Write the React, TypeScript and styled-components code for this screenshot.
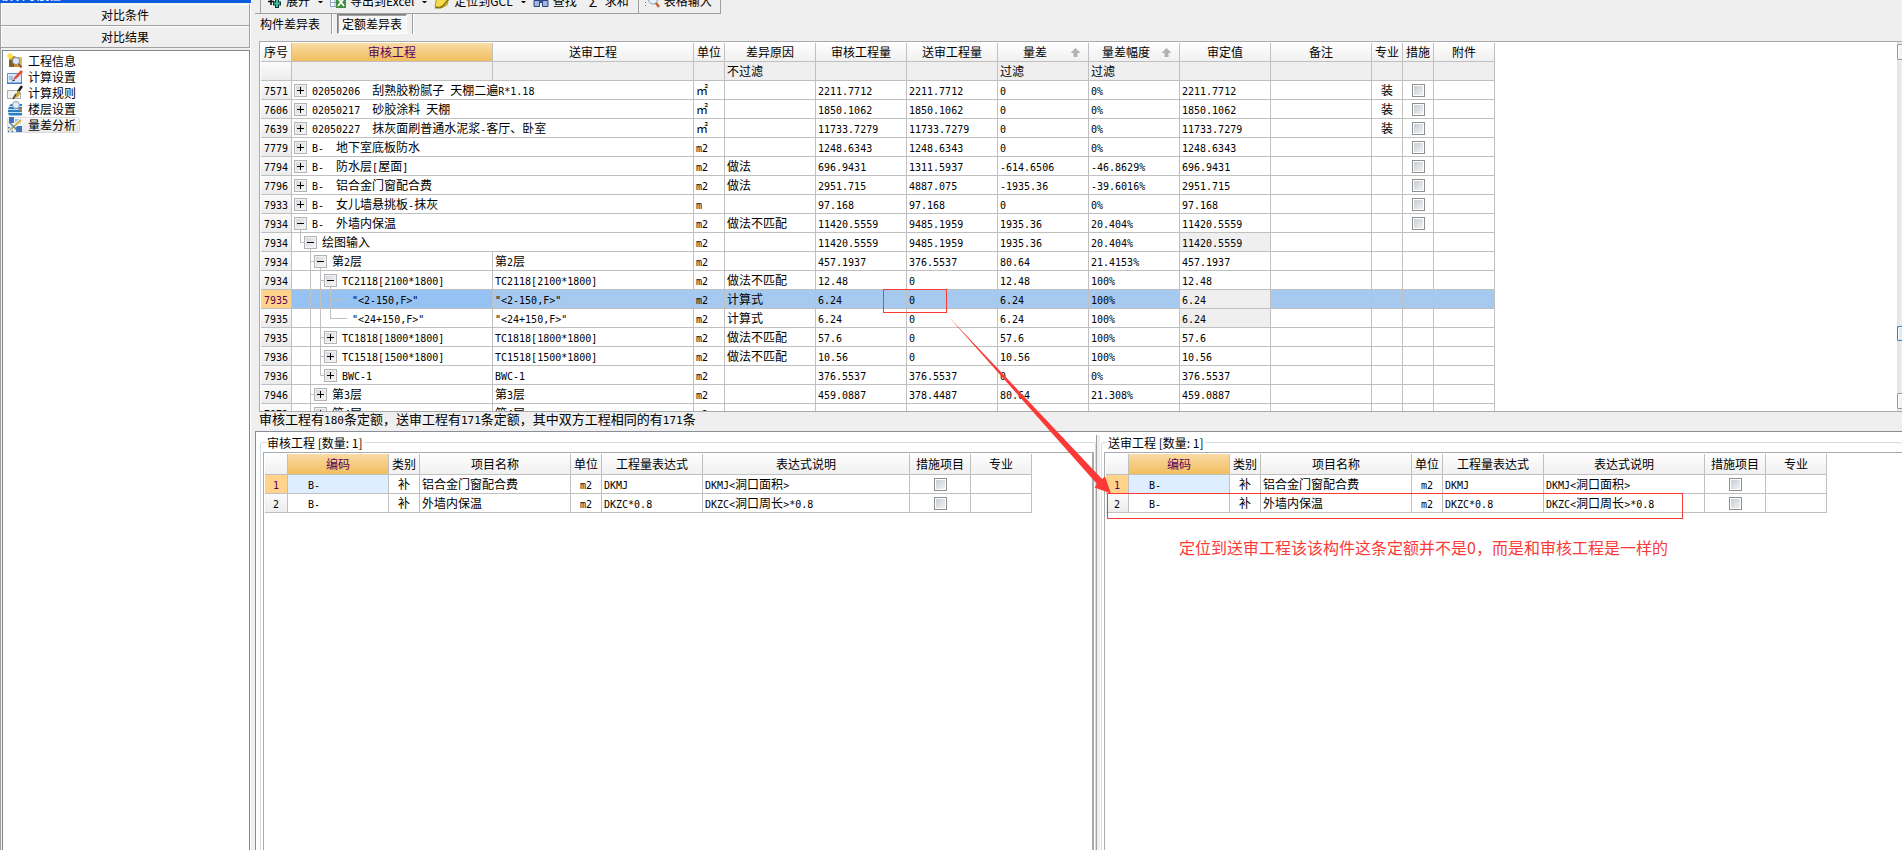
import React, { Fragment, ReactNode } from 'react';
import styled, { createGlobalStyle, css } from 'styled-components';

const line = '#c0c0c0';
const frame = '#a9aaab';
const red = '#fb3a38';

const GlobalStyle = createGlobalStyle`
  * { box-sizing: border-box; }
  body {
    margin: 0;
    overflow: hidden;
    background: #efefef;
    color: #000;
    font: 12px/18px "Noto Sans CJK SC", sans-serif;
  }
  button, input { font: inherit; color: inherit; margin: 0; padding: 0; }
`;

/* ---------- text ---------- */

const Latin = styled.span<{ $large?: boolean }>`
  font-family: "DejaVu Sans Mono", monospace;
  font-size: ${(p) => (p.$large ? 11 : 10)}px;
  line-height: 10px;
`;

function Mixed({ text, large }: { text: string; large?: boolean }) {
  return (
    <>
      {text.split(/([\x20-\x7e]+)/).map((part, i) =>
        i % 2 ? (
          <Latin key={i} $large={large}>
            {part}
          </Latin>
        ) : (
          <Fragment key={i}>{part}</Fragment>
        ),
      )}
    </>
  );
}

/* ---------- page frame ---------- */

const Page = styled.div`
  position: relative;
  display: flex;
  height: 100vh;
  overflow: hidden;
`;

const Sidebar = styled.aside`
  display: flex;
  flex-direction: column;
  flex: 0 0 251px;
`;

const TitleBar = styled.header`
  display: flex;
  align-items: flex-end;
  justify-content: space-between;
  height: 3px;
  padding: 0 12px 0 1px;
  overflow: hidden;
  background: #0a5be0;
  color: #fff;
  line-height: 16px;
  font-weight: bold;
`;

const NavBody = styled.div`
  display: flex;
  flex-direction: column;
  flex: 1;
  min-height: 0;
  padding-top: 1px;
  border-left: 1px solid #a0a0a0;
  border-right: 1px solid #fff;
`;

const NavHeading = styled.button`
  height: 22px;
  border: 0;
  border-right: 1px solid #a0a0a0;
  border-bottom: 1px solid #a0a0a0;
  background: #efefef;
  line-height: 21px;
  box-shadow: inset 1px 1px #fff;
`;

const NavList = styled.ul`
  flex: 1;
  margin: 2px 0 0 1px;
  padding: 2px 4px;
  border: 1px solid #83888e;
  border-bottom: 0;
  background: #fff;
  list-style: none;
`;

const NavLink = styled.a<{ $active?: boolean }>`
  display: flex;
  gap: 5px;
  width: max-content;
  height: 16px;
  padding-right: 4px;
  border-radius: 3px;
  color: #000;
  line-height: 16px;
  text-decoration: none;
  ${(p) => p.$active && css`
    background: linear-gradient(#fafafa, #e8e8e8);
    box-shadow: inset 0 0 0 1px #dcdcdc;
  `}
`;

const Main = styled.main`
  display: flex;
  flex-direction: column;
  flex: 1;
  min-width: 0;
  padding-left: 4px;
`;

/* ---------- toolbar and tabs ---------- */

const Toolbar = styled.div`
  display: flex;
  align-items: flex-end;
  width: max-content;
  height: 14px;
  padding: 0 8px 0 11px;
  overflow: hidden;
  border-right: 1px solid #a0a0a0;
  border-bottom: 1px solid #a0a0a0;
  box-shadow: inset 5px 0 #efefef, inset 6px 0 #a0a0a0;
`;

const Tool = styled.button`
  display: flex;
  align-items: center;
  gap: 4px;
  height: 24px;
  border: 0;
  background: none;
  white-space: nowrap;
`;

const Sigma = styled.span`
  width: 12px;
  font-size: 14px;
  text-align: left;
`;

const Caret = styled.i`
  width: 5px;
  margin: 0 7px 10px 8px;
  border: 2px solid transparent;
  border-top-color: #000;
  border-bottom: 0;
`;

const ToolGap = styled.i`
  width: 12px;
`;

const ToolDivider = styled.i`
  width: 1px;
  height: 24px;
  margin: 0 5px 0 9px;
  background: #a0a0a0;
`;

const Tabs = styled.nav`
  display: flex;
  height: 27px;
  padding: 0 5px 7px;
`;

const Tab = styled.button<{ $active?: boolean }>`
  height: 20px;
  margin-right: ${(p) => (p.$active ? 5 : 11)}px;
  padding: 0 ${(p) => (p.$active ? 4 : 0)}px;
  border: 0;
  background: none;
  line-height: 18px;
  ${(p) => p.$active && css`
    margin-left: 5px;
    border: 1px solid #fff;
    border-top-color: #808080;
    border-left-color: #808080;
    background: #f7f7f7;
    box-shadow: inset 1px 1px #a0a0a0;
  `}
`;

const TabDivider = styled.i`
  width: 1px;
  height: 20px;
  background: #a0a0a0;
  box-shadow: 1px 0 #fff;
`;

/* ---------- data grids ---------- */

const Viewport = styled.section`
  display: flex;
  flex: 37 1 0;
  min-height: 0;
  margin-left: 4px;
  border: 1px solid ${frame};
  border-right: 0;
  background: #fff;
`;

const GridClip = styled.div`
  flex: 1;
  min-width: 0;
  padding: 1px 0 0 1px;
  overflow: hidden;
`;

const Table = styled.table`
  width: 0;
  table-layout: fixed;
  border-collapse: separate;
  border-spacing: 0;
`;

const cell = css`
  height: 19px;
  padding: 0 2px;
  overflow: hidden;
  border: 0 solid ${line};
  border-width: 0 1px 1px 0;
  line-height: 18px;
  white-space: pre;
`;

const Th = styled.th<{ $current?: boolean; $tall?: boolean }>`
  ${cell}
  height: ${(p) => (p.$tall ? 21 : 19)}px;
  padding: 0;
  background: linear-gradient(#fefefe, #f0f0f0);
  font-weight: normal;
  ${(p) => p.$current && css`
    background: linear-gradient(#f9dba4, #f0be5e);
    color: #5a005a;
  `}
`;

const SortHead = styled.span`
  display: flex;
  align-items: center;
  justify-content: space-between;
  padding: 0 8px 0 0;
  &::before { content: ""; width: 1px; }
`;

type Tone = 'plain' | 'muted' | 'row' | 'focus' | 'pale';
const tones: Record<Tone, string> = {
  plain: '#fff',
  muted: '#efefef',
  row: '#a6c9ef',
  focus: '#95c2f3',
  pale: '#dfeeff',
};

const Td = styled.td<{ $tone?: Tone; $center?: boolean; $indent?: boolean }>`
  ${cell}
  background: ${(p) => tones[p.$tone ?? 'plain']};
  ${(p) => p.$center && 'padding: 0; text-align: center;'}
  ${(p) => p.$indent && 'padding-left: 20px;'}
`;

const RowHead = styled.th<{ $current?: boolean }>`
  ${cell}
  padding: 0;
  background: ${(p) => (p.$current ? '#ffd48a' : 'linear-gradient(#fbfbfb, #ececec)')};
  color: ${(p) => (p.$current ? '#5a005a' : '#000')};
  font-weight: normal;
`;

const Check = styled.input`
  appearance: none;
  display: block;
  width: 13px;
  height: 13px;
  margin: 1px auto 0;
  padding: 1px;
  border: 1px solid #8e8f8f;
  background: linear-gradient(135deg, #c4cad2, #f4f5f6);
  background-clip: content-box;
`;

/* ---------- tree column ---------- */

const TreeLine = styled.div`
  display: flex;
  height: 18px;
  padding-left: 1px;
`;

type GuideKind = ' ' | '|' | 'T' | 'L';

const Guide = styled.i<{ $kind: GuideKind }>`
  flex: 0 0 10px;
  background-repeat: no-repeat;
  background-image: linear-gradient(${line}, ${line}), linear-gradient(${line}, ${line});
  background-position: 5px 0, 5px 9px;
  background-size:
    ${(p) => (p.$kind === ' ' ? '0 0' : p.$kind === 'L' ? '1px 10px' : '1px 18px')},
    ${(p) => (p.$kind === 'T' || p.$kind === 'L' ? '5px 1px' : '0 0')};
`;

const NodeSlot = styled.span<{ $open: boolean; $leaf: boolean }>`
  flex: 0 0 17px;
  height: 18px;
  padding-top: 3px;
  background-repeat: no-repeat;
  background-image: linear-gradient(${line}, ${line});
  background-position: ${(p) => (p.$leaf ? '0 9px' : '5px 15px')};
  background-size: ${(p) => (p.$leaf ? '12px 1px' : p.$open ? '1px 3px' : '0 0')};
`;

const Toggle = styled.button`
  display: block;
  width: 13px;
  height: 13px;
  margin-left: -1px;
  border: 1px solid #b4b4b4;
  background: linear-gradient(135deg, #cfd3da, #fafafa);
  box-shadow: inset 0 0 0 1px #f2f2f2;
  svg { display: block; }
`;

function Tree({ guides, open, leaf, text }: { guides: string; open: boolean; leaf: boolean; text: string }) {
  return (
    <TreeLine>
      {guides.split('').map((k, i) => (
        <Guide key={i} $kind={k as GuideKind} />
      ))}
      <NodeSlot $open={open} $leaf={leaf}>
        {!leaf && (
          <Toggle aria-label={open ? '折叠' : '展开'}>
            <svg width="11" height="11" stroke="#000">
              <path d={open ? 'M2 5.5h7' : 'M2 5.5h7M5.5 2v7'} />
            </svg>
          </Toggle>
        )}
      </NodeSlot>
      <span>
        <Mixed text={text} />
      </span>
    </TreeLine>
  );
}

/* ---------- scroll bar ---------- */

const ScrollBar = styled.div`
  display: flex;
  flex-direction: column;
  flex: 0 0 5px;
  padding: 2px 0;
  overflow: hidden;
  background: linear-gradient(90deg, #e2e2e2, #f0f0f0);
`;

const ScrollPiece = styled.button<{ $thumb?: boolean }>`
  flex: 0 0 ${(p) => (p.$thumb ? 15 : 16)}px;
  border: 1px solid ${(p) => (p.$thumb ? '#3c7fb1' : '#979797')};
  border-right: 0;
  border-radius: 2px 0 0 2px;
  background: ${(p) => (p.$thumb ? '#d5eefb' : '#f3f3f3')};
  box-shadow: inset 1px 1px #fff;
`;

const Track = styled.i<{ $share: number }>`
  flex: ${(p) => p.$share} 1 0;
`;

/* ---------- lower half ---------- */

const Status = styled.p`
  flex: 0 0 19px;
  margin: 0 0 0 4px;
  font-size: 13px;
  line-height: 13px;
`;

const Lower = styled.div`
  display: grid;
  grid-template-columns: minmax(0, 840fr) 4px minmax(0, 802fr);
  flex: 42 1 0;
  min-height: 0;
  overflow: hidden;
  border-top: 1px solid #8a8c96;
  border-left: 1px solid #8a8c96;
  background: #fff;
`;

const Splitter = styled.div`
  margin-top: 3px;
  border-left: 1px solid #a0a0a0;
  background: #efefef;
`;

const Group = styled.fieldset<{ $last?: boolean }>`
  display: flex;
  min-width: 0;
  margin: 4px 0 0 ${(p) => (p.$last ? 1 : 4)}px;
  padding: 2px ${(p) => (p.$last ? 0 : 1)}px 0 2px;
  border: 1px solid #d3dde6;
  border-bottom: 0;
  ${(p) => p.$last && 'border-right: 0;'}
  border-radius: 3px 3px 0 0;
`;

const Legend = styled.legend`
  margin-left: 3px;
  padding: 0 1px;
  height: 14px;
  line-height: 14px;
`;

const GroupGrid = styled.div<{ $last?: boolean }>`
  flex: 1;
  min-width: 0;
  padding: 1px 0 0 1px;
  overflow: hidden;
  border: 1px solid ${frame};
  border-bottom: 0;
  border-right-width: ${(p) => (p.$last ? 0 : 2)}px;
`;

/* ---------- annotation layer ---------- */

const Markup = styled.svg`
  position: absolute;
  inset: 0;
  width: 100%;
  height: 100%;
  pointer-events: none;
`;

const Remark = styled.p`
  position: absolute;
  left: 1179px;
  top: 535px;
  margin: 0;
  color: ${red};
  font-size: 16px;
  line-height: 24px;
  white-space: nowrap;
`;

/* ---------- icons ---------- */

const Icon = ({ children }: { children: ReactNode }) => (
  <svg width="16" height="16" viewBox="0 0 16 16" fill="none">
    {children}
  </svg>
);

const ProjectIcon = () => (
  <Icon>
    <path d="M4 3h4l1 1h6v10H2V6z" fill="#c79432" />
    <path d="M2 7h5v7H2z" fill="#8c5f1c" />
    <path d="M10 4h5v9h-5z" fill="#e3b75c" />
    <path d="M3 0v6M0 3h6M1 1l4 4M5 1L1 5" stroke="#ffe04a" strokeWidth="1.4" />
    <circle cx="9" cy="8" r="3.6" fill="#dbe9f8" stroke="#7d8ba3" />
    <path d="M11.5 11l3 3.5" stroke="#9c5a33" strokeWidth="2" />
  </Icon>
);
const SettingsIcon = () => (
  <Icon>
    <path d="M.5 4.5h14v10H.5z" fill="#dbe9fa" stroke="#5b8fd0" />
    <path d="M0 13.5h15V15H0z" fill="#3e78c2" />
    <path d="M2 8h4M2 10h4" stroke="#6b94c9" />
    <path d="M6 11l1.5-3L14 1l2 2-6.500 6.500z" fill="#e44a38" />
    <path d="M5 12l3-1" stroke="#333" />
  </Icon>
);
const RuleIcon = () => (
  <Icon>
    <path d="M.5 5.5h10l3 2v6H.5z" fill="#eef0f2" stroke="#a7adb5" />
    <path d="M15 1l-4 6" stroke="#1d1d1d" strokeWidth="2.6" />
    <path d="M11.5 5.5l2 2-2 4-6 2.5 3-5z" fill="#caa53c" />
    <path d="M6 14l3-5" stroke="#5b4a18" strokeWidth="1.5" />
  </Icon>
);
const FloorIcon = () => (
  <Icon>
    <path d="M4 3h11v2H2zM2 6h13v2H1zM1 9h14v2H1zM1 12h14v2.5H2z" fill="#2c7fc2" />
    <path d="M2 5.5h12M1 8.5h13M1 11.5h13" stroke="#bfe0f6" />
    <circle cx="9" cy="4" r="3.5" fill="#e4eef8" stroke="#8a98ab" />
    <path d="M12 7l2.5 3" stroke="#c07a4a" strokeWidth="2" />
  </Icon>
);
const AnalysisIcon = () => (
  <Icon>
    <path d="M2 0h5v6H2zM9 9h6v6H9zM1 10h5v5H1z" fill="#3d72bd" />
    <path d="M8 2h6v5H8z" fill="#9dbbe4" />
    <path d="M2 14L14 3" stroke="#f5f5f5" strokeWidth="4" />
    <path d="M3 13L14 3" stroke="#c9b14a" strokeWidth="2" />
    <path d="M2 5l9 9" stroke="#5d7fb0" strokeWidth="1.5" />
  </Icon>
);
const ExpandIcon = () => (
  <Icon>
    <path d="M5 5v7M2 8.5h6" stroke="#111" strokeWidth="1.6" />
    <path d="M11 5v10M7 10.5h8" stroke="#07343a" strokeWidth="4" />
    <path d="M11 6v8M8 10.5h6" stroke="#3fc08f" strokeWidth="2" />
  </Icon>
);
const ExcelIcon = () => (
  <Icon>
    <path d="M.5 1.5h9v12h-9zM.5 5.5h9M.5 9.5h9M5 1v12" stroke="#8fa8ca" fill="#fff" />
    <path d="M6 3h10v12H6z" fill="#3f8f3c" />
    <path d="M8 5.5l6 7.5M14 5.5L8 13" stroke="#fff" strokeWidth="1.8" />
  </Icon>
);
const LocateIcon = () => (
  <Icon>
    <path d="M1 13l2-9 8-3 4 3-2 8-6 3z" fill="#f3dc4e" stroke="#b6961d" />
    <path d="M1 14.5c4 1 8-1 10-4l4-5" stroke="#8c7414" strokeWidth="1.5" />
  </Icon>
);
const FindIcon = () => (
  <Icon>
    <path d="M2 2h4v5H2zM10 2h4v5h-4zM6 6h4v4H6z" fill="#35528f" />
    <path d="M1 7.5h5.5v6H1zM9.5 7.5H15v6H9.5z" fill="#9fb6e0" stroke="#2c437e" />
  </Icon>
);
const SheetIcon = () => (
  <Icon>
    <path d="M1.5 0v15" stroke="#777" strokeDasharray="1 2" />
    <circle cx="9" cy="6.5" r="4.5" fill="#e8f0fb" stroke="#8d9bb0" />
    <path d="M12 10l3 4" stroke="#c0692c" strokeWidth="2.6" />
  </Icon>
);
const SortIcon = () => (
  <svg width="9" height="9" viewBox="0 0 9 9">
    <path d="M4.5 0L9 4.5V5H6.500v4h-4V5H0v-.5z" fill="#b2b2b2" />
  </svg>
);

/* ---------- data ---------- */

const navItems: [string, () => ReactNode][] = [
  ['工程信息', ProjectIcon],
  ['计算设置', SettingsIcon],
  ['计算规则', RuleIcon],
  ['楼层设置', FloorIcon],
  ['量差分析', AnalysisIcon],
];

const columns: [string, number][] = [
  ['序号', 31], ['审核工程', 201], ['送审工程', 201], ['单位', 31], ['差异原因', 91],
  ['审核工程量', 91], ['送审工程量', 91], ['量差', 91], ['量差幅度', 91], ['审定值', 91],
  ['备注', 101], ['专业', 31], ['措施', 31], ['附件', 61],
];
const filters: Record<number, string> = { 4: '不过滤', 7: '过滤', 8: '过滤' };

interface Item {
  seq: string;
  name: string;
  guides?: string;
  open?: boolean;
  leaf?: boolean;
  sent?: string;
  unit: string;
  reason?: string;
  values: string[];
  locked?: boolean;
  major?: string;
  check?: boolean;
  selected?: boolean;
}

const items: Item[] = [
  { seq: '7571', name: '02050206  刮熟胶粉腻子 天棚二遍R*1.18', unit: '㎡', values: ['2211.7712', '2211.7712', '0', '0%', '2211.7712'], major: '装', check: true },
  { seq: '7606', name: '02050217  砂胶涂料 天棚', unit: '㎡', values: ['1850.1062', '1850.1062', '0', '0%', '1850.1062'], major: '装', check: true },
  { seq: '7639', name: '02050227  抹灰面刷普通水泥浆-客厅、卧室', unit: '㎡', values: ['11733.7279', '11733.7279', '0', '0%', '11733.7279'], major: '装', check: true },
  { seq: '7779', name: 'B-  地下室底板防水', unit: 'm2', values: ['1248.6343', '1248.6343', '0', '0%', '1248.6343'], check: true },
  { seq: '7794', name: 'B-  防水层[屋面]', unit: 'm2', reason: '做法', values: ['696.9431', '1311.5937', '-614.6506', '-46.8629%', '696.9431'], check: true },
  { seq: '7796', name: 'B-  铝合金门窗配合费', unit: 'm2', reason: '做法', values: ['2951.715', '4887.075', '-1935.36', '-39.6016%', '2951.715'], check: true },
  { seq: '7933', name: 'B-  女儿墙悬挑板-抹灰', unit: 'm', values: ['97.168', '97.168', '0', '0%', '97.168'], check: true },
  { seq: '7934', name: 'B-  外墙内保温', open: true, unit: 'm2', reason: '做法不匹配', values: ['11420.5559', '9485.1959', '1935.36', '20.404%', '11420.5559'], check: true },
  { seq: '7934', name: '绘图输入', guides: 'L', open: true, unit: 'm2', values: ['11420.5559', '9485.1959', '1935.36', '20.404%', '11420.5559'], locked: true },
  { seq: '7934', name: '第2层', guides: ' T', open: true, sent: '第2层', unit: 'm2', values: ['457.1937', '376.5537', '80.64', '21.4153%', '457.1937'] },
  { seq: '7934', name: 'TC2118[2100*1800]', guides: ' |T', open: true, sent: 'TC2118[2100*1800]', unit: 'm2', reason: '做法不匹配', values: ['12.48', '0', '12.48', '100%', '12.48'] },
  { seq: '7935', name: '"<2-150,F>"', guides: ' ||T', leaf: true, sent: '"<2-150,F>"', unit: 'm2', reason: '计算式', values: ['6.24', '0', '6.24', '100%', '6.24'], locked: true, selected: true },
  { seq: '7935', name: '"<24+150,F>"', guides: ' ||L', leaf: true, sent: '"<24+150,F>"', unit: 'm2', reason: '计算式', values: ['6.24', '0', '6.24', '100%', '6.24'], locked: true },
  { seq: '7935', name: 'TC1818[1800*1800]', guides: ' |T', sent: 'TC1818[1800*1800]', unit: 'm2', reason: '做法不匹配', values: ['57.6', '0', '57.6', '100%', '57.6'] },
  { seq: '7936', name: 'TC1518[1500*1800]', guides: ' |T', sent: 'TC1518[1500*1800]', unit: 'm2', reason: '做法不匹配', values: ['10.56', '0', '10.56', '100%', '10.56'] },
  { seq: '7936', name: 'BWC-1', guides: ' |L', sent: 'BWC-1', unit: 'm2', values: ['376.5537', '376.5537', '0', '0%', '376.5537'] },
  { seq: '7946', name: '第3层', guides: ' T', sent: '第3层', unit: 'm2', values: ['459.0887', '378.4487', '80.64', '21.308%', '459.0887'] },
  { seq: '7972', name: '第4层', guides: ' T', sent: '第4层', unit: 'm2', values: ['', '', '', '', ''] },
];

const detailRows = [
  ['B-', '补', '铝合金门窗配合费', 'm2', 'DKMJ', 'DKMJ<洞口面积>'],
  ['B-', '补', '外墙内保温', 'm2', 'DKZC*0.8', 'DKZC<洞口周长>*0.8'],
];

function MainGrid() {
  return (
    <Table>
      <colgroup>
        {columns.map(([name, width]) => (
          <col key={name} width={width} />
        ))}
      </colgroup>
      <thead>
        <tr>
          {columns.map(([name], i) => (
            <Th key={name} $current={i === 1}>
              {i === 7 || i === 8 ? (
                <SortHead>
                  {name}
                  <SortIcon />
                </SortHead>
              ) : (
                name
              )}
            </Th>
          ))}
        </tr>
      </thead>
      <tbody>
        <tr>
          <RowHead />
          {columns.slice(1).map(([name], i) => (
            <Td key={name} $tone="muted">{filters[i + 1]}</Td>
          ))}
        </tr>
        {items.map((item, n) => {
          const tone: Tone = item.selected ? 'row' : 'plain';
          return (
            <tr key={n}>
              <RowHead $current={item.selected}>
                <Mixed text={item.seq} />
              </RowHead>
              <Td $tone={item.selected ? 'focus' : 'plain'} colSpan={item.sent ? 1 : 2}>
                <Tree guides={item.guides ?? ''} open={!!item.open} leaf={!!item.leaf} text={item.name} />
              </Td>
              {item.sent && <Td $tone={tone}><Mixed text={item.sent} /></Td>}
              <Td $tone={tone}><Mixed text={item.unit} /></Td>
              <Td $tone={tone}>{item.reason}</Td>
              {item.values.map((value, i) => (
                <Td key={i} $tone={i === 4 && item.locked ? 'muted' : tone}>
                  <Mixed text={value} />
                </Td>
              ))}
              <Td $tone={tone} />
              <Td $tone={tone} $center>{item.major}</Td>
              <Td $tone={tone} $center>
                {item.check && <Check type="checkbox" aria-label={`措施 ${item.seq}`} />}
              </Td>
              <Td $tone={tone} />
            </tr>
          );
        })}
      </tbody>
    </Table>
  );
}

function Detail({ title, noteWidth, last }: { title: string; noteWidth: number; last?: boolean }) {
  const cols: [string, number][] = [
    ['', 23], ['编码', 101], ['类别', 31], ['项目名称', 151], ['单位', 31],
    ['工程量表达式', 101], ['表达式说明', noteWidth], ['措施项目', 61], ['专业', 61],
  ];
  return (
    <Group $last={last}>
      <Legend>{title} [数量: 1]</Legend>
      <GroupGrid $last={last}>
        <Table>
          <colgroup>
            {cols.map(([name, width]) => (
              <col key={name} width={width} />
            ))}
          </colgroup>
          <thead>
            <tr>
              {cols.map(([name], i) => (
                <Th key={name} $current={i === 1} $tall>{name}</Th>
              ))}
            </tr>
          </thead>
          <tbody>
            {detailRows.map((row, n) => (
              <tr key={n}>
                <RowHead $current={n === 0}>
                  <Mixed text={String(n + 1)} />
                </RowHead>
                {row.map((value, i) => (
                  <Td key={i} $indent={i === 0} $center={i === 1 || i === 3} $tone={n === 0 && i === 0 ? 'pale' : 'plain'}>
                    <Mixed text={value} />
                  </Td>
                ))}
                <Td $center>
                  <Check type="checkbox" aria-label={`${title} 措施项目 ${n + 1}`} />
                </Td>
                <Td />
              </tr>
            ))}
          </tbody>
        </Table>
      </GroupGrid>
    </Group>
  );
}

export default function App() {
  return (
    <Page>
      <GlobalStyle />
      <Sidebar>
        <TitleBar>
          <span>模块导航栏</span>
          <span>⊥ ×</span>
        </TitleBar>
        <NavBody>
          <NavHeading>对比条件</NavHeading>
          <NavHeading>对比结果</NavHeading>
          <NavList>
            {navItems.map(([name, Glyph], i) => (
              <li key={name}>
                <NavLink href="#" $active={i === 4}>
                  <Glyph />
                  {name}
                </NavLink>
              </li>
            ))}
          </NavList>
        </NavBody>
      </Sidebar>
      <Main>
        <Toolbar>
          <Tool><ExpandIcon />展开</Tool>
          <Caret />
          <Tool><ExcelIcon />导出到Excel</Tool>
          <Caret />
          <Tool><LocateIcon />定位到GCL</Tool>
          <Caret />
          <Tool><FindIcon />查找</Tool>
          <ToolGap />
          <Tool><Sigma>Σ</Sigma>求和</Tool>
          <ToolDivider />
          <Tool><SheetIcon />表格输入</Tool>
        </Toolbar>
        <Tabs>
          <Tab>构件差异表</Tab>
          <TabDivider />
          <Tab $active>定额差异表</Tab>
          <TabDivider />
        </Tabs>
        <Viewport>
          <GridClip>
            <MainGrid />
          </GridClip>
          <ScrollBar>
            <ScrollPiece aria-label="向上滚动" />
            <Track $share={265} />
            <ScrollPiece $thumb aria-label="滑块" />
            <Track $share={52} />
            <ScrollPiece aria-label="向下滚动" />
          </ScrollBar>
        </Viewport>
        <Status>
          <Mixed large text="审核工程有180条定额，送审工程有171条定额，其中双方工程相同的有171条" />
        </Status>
        <Lower>
          <Detail title="审核工程" noteWidth={207} />
          <Splitter />
          <Detail title="送审工程" noteWidth={161} last />
        </Lower>
      </Main>
      <Markup fill="none" stroke={red}>
        <rect x="883.5" y="289.5" width="63" height="23" />
        <rect x="1107.5" y="493.5" width="575" height="25" />
        <path
          d="M948 316L1102 479L1105 476.5L1111 493.5L1094.5 487.5L1097 484Z"
          fill={red}
          stroke="none"
        />
      </Markup>
      <Remark>定位到送审工程该该构件这条定额并不是0，而是和审核工程是一样的</Remark>
    </Page>
  );
}
